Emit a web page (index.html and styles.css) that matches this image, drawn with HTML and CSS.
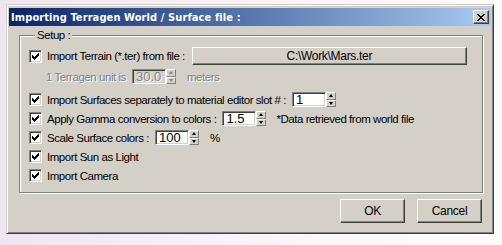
FILE: index.html
```html
<!DOCTYPE html>
<html lang="en">
<head>
  <meta charset="UTF-8" />
  <title>Importing Terragen World / Surface file</title>
  <link rel="stylesheet" href="styles.css">
</head>
<body>

<div class="window">
  <div class="titlebar">
    <span class="title">Importing Terragen World / Surface file :</span>
    <button class="close-btn" aria-label="Close">
      <svg width="8" height="7" viewBox="0 0 8 7" shape-rendering="crispEdges">
        <path d="M0 0h2v1h-2zM6 0h2v1h-2zM1 1h2v1h-2zM5 1h2v1h-2zM2 2h4v1h-4zM3 3h2v1h-2zM2 4h4v1h-4zM1 5h2v1h-2zM5 5h2v1h-2zM0 6h2v1h-2zM6 6h2v1h-2z" fill="#000"/>
      </svg>
    </button>
  </div>

  <div class="dialog-body">
    <div class="group">
      <div class="legend">Setup :</div>

      <!-- terrain file -->
      <div class="row row-file">
        <span class="check checked"></span>
        <span class="label">Import Terrain (*.ter) from file :</span>
        <button class="btn file-btn">C:\Work\Mars.ter</button>
      </div>

      <div class="row row-unit disabled">
        <span class="label">1 Terragen unit is</span>
        <span class="field"><span class="value">30.0</span></span>
        <span class="spin"><span class="up"></span><span class="down"></span></span>
        <span class="label unit">meters</span>
      </div>

      <div class="row row-surfaces">
        <span class="check checked"></span>
        <span class="label">Import Surfaces separately to material editor slot # :</span>
        <span class="field"><span class="value">1</span></span>
        <span class="spin"><span class="up"></span><span class="down"></span></span>
      </div>

      <div class="row">
        <span class="check checked"></span>
        <span class="label">Apply Gamma conversion to colors :</span>
        <span class="field"><span class="value">1.5</span></span>
        <span class="spin"><span class="up"></span><span class="down"></span></span>
        <span class="label note">*Data retrieved from world file</span>
      </div>

      <div class="row">
        <span class="check checked"></span>
        <span class="label">Scale Surface colors :</span>
        <span class="field"><span class="value">100</span></span>
        <span class="spin"><span class="up"></span><span class="down"></span></span>
        <span class="label unit">%</span>
      </div>

      <div class="row">
        <span class="check checked"></span>
        <span class="label">Import Sun as Light</span>
      </div>

      <div class="row">
        <span class="check checked"></span>
        <span class="label">Import Camera</span>
      </div>
    </div>

    <div class="actions">
      <button class="btn action-btn">OK</button>
      <button class="btn action-btn">Cancel</button>
    </div>
  </div>
</div>

</body>
</html>
```

FILE: styles.css
```css
body {
  margin: 0;
  height: 245px;
  overflow: hidden;
  background: linear-gradient(to right, #efe5f0, #f8f3f8 45%, #fdfcfd);
  font-family: 'Liberation Sans', Arial, sans-serif;
  font-size: 11.5px;
  letter-spacing: -0.45px;
  color: #000;
}

/* window frame */
.window {
  box-sizing: border-box;
  margin: 4px 0 0 6px;
  width: 488px;
  height: 230px;
  background: #d4d0c8;
  border: 1px solid;
  border-color: #d4d0c8 #404040 #404040 #d4d0c8;
  box-shadow: inset 1px 1px 0 #fff, inset -1px -1px 0 #808080;
  padding: 3px 2px 2px 2px;
  display: flex;
  flex-direction: column;
}

.titlebar {
  height: 18px;
  display: flex;
  align-items: center;
  justify-content: space-between;
  padding: 0 2px 0 2px;
  background: linear-gradient(to right, #0a246a, #a6caf0);
}

.title {
  color: #fff;
  font-family: 'DejaVu Sans Condensed', 'Liberation Sans', sans-serif;
  font-weight: bold;
  font-size: 11px;
  letter-spacing: 0.1px;
}

.close-btn {
  box-sizing: border-box;
  width: 16px;
  height: 14px;
  padding: 0;
  display: flex;
  align-items: center;
  justify-content: center;
  background: #d4d0c8;
  border: 1px solid;
  border-color: #fff #404040 #404040 #fff;
  box-shadow: inset -1px -1px 0 #808080;
}

.dialog-body {
  flex: 1;
  display: flex;
  flex-direction: column;
  padding: 9px 8px 0 10px;
}

/* etched group box */
.group {
  box-sizing: border-box;
  height: 158px;
  border: 1px solid #808080;
  box-shadow: 1px 1px 0 #fff, inset 1px 1px 0 #fff;
  padding: 0 0 0 9px;
}

.legend {
  width: fit-content;
  margin: -8px 0 0 6px;
  padding: 0 2px;
  line-height: 14px;
  background: #d4d0c8;
}

.row {
  height: 19px;
  display: flex;
  align-items: center;
  white-space: nowrap;
}

.row-file {
  height: 18px;
  margin-top: 5px;
}

.row-unit {
  margin-top: 2px;
  padding-left: 17px;
}

.row-surfaces {
  margin-top: 4px;
}

.check {
  box-sizing: border-box;
  width: 13px;
  height: 13px;
  margin-right: 5px;
  flex: none;
  background: #fff;
  border: 1px solid;
  border-color: #808080 #fff #fff #808080;
  box-shadow: inset 1px 1px 0 #404040, inset -1px -1px 0 #d4d0c8;
}

.check.checked {
  background: #fff url("data:image/svg+xml;utf8,<svg xmlns='http://www.w3.org/2000/svg' width='7' height='7' shape-rendering='crispEdges'><path d='M6 0h1v3h-1zM5 1h1v3h-1zM4 2h1v3h-1zM3 3h1v3h-1zM2 4h1v3h-1zM1 3h1v3h-1zM0 2h1v3h-1z' fill='black'/></svg>") no-repeat 2px 2px;
}

.label {
  flex: none;
}

.btn {
  box-sizing: border-box;
  font-family: inherit;
  font-size: 12px;
  letter-spacing: -0.3px;
  color: #000;
  background: #d4d0c8;
  border: 1px solid;
  border-color: #fff #404040 #404040 #fff;
  box-shadow: inset -1px -1px 0 #808080;
  padding: 0;
}

.file-btn {
  width: 275px;
  height: 18px;
  margin-left: 7px;
}

/* sunken edit field */
.field {
  box-sizing: border-box;
  width: 34px;
  height: 15px;
  margin-left: 6px;
  display: flex;
  align-items: center;
  padding-left: 3px;
  background: #fff;
  border: 1px solid;
  border-color: #808080 #fff #fff #808080;
  box-shadow: inset 1px 1px 0 #404040, inset -1px -1px 0 #d4d0c8;
  font-size: 13px;
  letter-spacing: 0;
}

.disabled .label,
.disabled .value {
  color: #808080;
  text-shadow: 1px 1px 0 #fff;
}

.disabled .field {
  background: #d4d0c8;
}

.spin {
  width: 10px;
  height: 15px;
  display: flex;
  flex-direction: column;
}

.spin .up,
.spin .down {
  box-sizing: border-box;
  height: 7px;
  flex: 1;
  display: flex;
  align-items: center;
  justify-content: center;
  background: #d4d0c8;
  border: 1px solid;
  border-color: #fff #808080 #808080 #fff;
}

.spin .up::after {
  content: '';
  border-left: 2px solid transparent;
  border-right: 2px solid transparent;
  border-bottom: 3px solid #000;
}

.spin .down::after {
  content: '';
  border-left: 2px solid transparent;
  border-right: 2px solid transparent;
  border-top: 3px solid #000;
}

.disabled .spin .up::after {
  border-bottom-color: #808080;
}

.disabled .spin .down::after {
  border-top-color: #808080;
}

.unit {
  margin-left: 11px;
}

.note {
  margin-left: 10px;
}

.actions {
  display: flex;
  justify-content: flex-end;
  gap: 12px;
  padding: 6px 1px 0 0;
}

.action-btn {
  width: 65px;
  height: 24px;
}
```
